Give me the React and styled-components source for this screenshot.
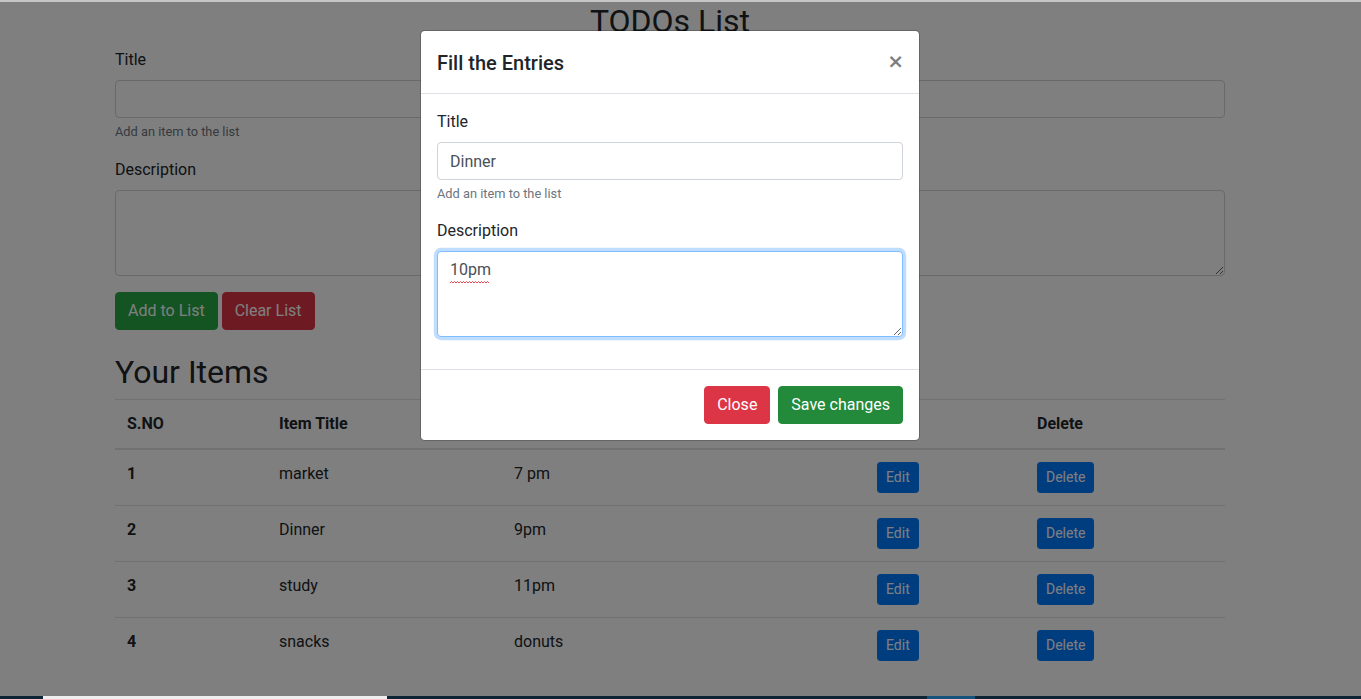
import React from 'react'
import styled, { createGlobalStyle } from 'styled-components'

const GlobalStyle = createGlobalStyle`
  *, *::before, *::after { box-sizing: border-box; }
  html, body { margin: 0; height: 100%; }
  body {
    font-family: Roboto, "Liberation Sans", Arial, sans-serif;
    font-size: 16px;
    line-height: 1.5;
    color: #212529;
    background: #fff;
    overflow: hidden;
  }
`

const items = [
  { id: 1, title: 'market', desc: '7 pm' },
  { id: 2, title: 'Dinner', desc: '9pm' },
  { id: 3, title: 'study', desc: '11pm' },
  { id: 4, title: 'snacks', desc: 'donuts' },
]

function App() {
  return (
    <Screen>
      <GlobalStyle />
      <TopEdge />
      <Viewport>
        <Container>
          <PageTitle>TODOs List</PageTitle>
          <FormGroup>
            <Label>Title</Label>
            <Input type="text" />
            <HelpText>Add an item to the list</HelpText>
          </FormGroup>
          <FormGroup>
            <Label>Description</Label>
            <TextArea rows={3} />
          </FormGroup>
          <ButtonRow>
            <Button $bg="#28a745">Add to List</Button>
            <Button $bg="#dc3545">Clear List</Button>
          </ButtonRow>

          <SectionTitle>Your Items</SectionTitle>
          <Table>
            <thead>
              <tr>
                <Th $width="152px">S.NO</Th>
                <Th $width="235px">Item Title</Th>
                <Th $width="363px">Item Description</Th>
                <Th $width="160px">Edit</Th>
                <Th>Delete</Th>
              </tr>
            </thead>
            <tbody>
              {items.map(item => (
                <tr key={item.id}>
                  <RowHead>{item.id}</RowHead>
                  <Td>{item.title}</Td>
                  <Td>{item.desc}</Td>
                  <Td><Button $bg="#007bff" $small>Edit</Button></Td>
                  <Td><Button $bg="#007bff" $small>Delete</Button></Td>
                </tr>
              ))}
            </tbody>
          </Table>
        </Container>

        <Backdrop />

        <ModalLayer>
          <Dialog>
            <ModalHeader>
              <ModalTitle>Fill the Entries</ModalTitle>
              <CloseX aria-label="Close">&times;</CloseX>
            </ModalHeader>
            <ModalBody>
              <FormGroup>
                <Label>Title</Label>
                <Input type="text" defaultValue="Dinner" />
                <HelpText>Add an item to the list</HelpText>
              </FormGroup>
              <FormGroup>
                <Label>Description</Label>
                <FieldWrap>
                  <TextArea rows={3} defaultValue="10pm" $focused />
                  <Squiggle width="40" height="3" viewBox="0 0 40 3">
                    <path d="M0 2 L1.5 0.5 L3 2 L4.5 0.5 L6 2 L7.5 0.5 L9 2 L10.5 0.5 L12 2 L13.5 0.5 L15 2 L16.5 0.5 L18 2 L19.5 0.5 L21 2 L22.5 0.5 L24 2 L25.5 0.5 L27 2 L28.5 0.5 L30 2 L31.5 0.5 L33 2 L34.5 0.5 L36 2 L37.5 0.5 L39 2" fill="none" stroke="#e0323c" strokeWidth="0.9" />
                  </Squiggle>
                </FieldWrap>
              </FormGroup>
            </ModalBody>
            <ModalFooter>
              <Button $bg="#dc3545">Close</Button>
              <Button $bg="#228a3a">Save changes</Button>
            </ModalFooter>
          </Dialog>
        </ModalLayer>
      </Viewport>
      <Taskbar>
        <TaskItem $w="43px" />
        <TaskItem $w="344px" $c="#eeeeee" />
        <TaskItem $w="540px" />
        <TaskItem $w="48px" $c="#15527c" />
      </Taskbar>
    </Screen>
  )
}

export default App

const Screen = styled.div`
  display: flex;
  flex-direction: column;
  height: 100vh;
`

const TopEdge = styled.div`
  flex-shrink: 0;
  height: 2px;
  background: #c6c6c6;
`

const Viewport = styled.div`
  position: relative;
  flex: 1;
  overflow: hidden;
  padding-right: 21px;
`

const Container = styled.div`
  max-width: 1140px;
  margin: 0 auto;
  padding: 0 15px;
`

const PageTitle = styled.h2`
  margin: 0 0 8px;
  text-align: center;
  font-size: 32px;
  font-weight: 400;
  line-height: 1.2;
`

const SectionTitle = styled.h2`
  margin: 23px 0 8px;
  font-size: 32px;
  font-weight: 400;
  line-height: 1.2;
`

const FormGroup = styled.div`
  margin-bottom: 16px;
`

const Label = styled.label`
  display: inline-block;
  margin-bottom: 8px;
`

const Input = styled.input`
  display: block;
  width: 100%;
  height: 38px;
  padding: 6px 12px;
  font-family: inherit;
  font-size: 16px;
  line-height: 1.5;
  color: #495057;
  background: #fff;
  border: 1px solid #ced4da;
  border-radius: 4px;
  outline: none;
`

const TextArea = styled.textarea`
  display: block;
  width: 100%;
  padding: 6px 12px;
  font-family: inherit;
  font-size: 16px;
  line-height: 1.5;
  color: #495057;
  background: #fff;
  border: 1px solid ${p => (p.$focused ? '#80bdff' : '#ced4da')};
  border-radius: 4px;
  box-shadow: ${p => (p.$focused ? '0 0 0 3.2px rgba(0, 123, 255, 0.25)' : 'none')};
  outline: none;
  resize: vertical;
`

const FieldWrap = styled.div`
  position: relative;
`

const Squiggle = styled.svg`
  position: absolute;
  left: 13px;
  top: 30px;
`

const HelpText = styled.small`
  display: block;
  margin-top: 4px;
  font-size: 12.8px;
  color: #6c757d;
`

const ButtonRow = styled.div`
  display: flex;
  gap: 4px;
`

const Button = styled.button`
  display: inline-block;
  padding: ${p => (p.$small ? '4px 8px' : '6px 12px')};
  font-family: inherit;
  font-size: ${p => (p.$small ? '14px' : '16px')};
  line-height: 1.5;
  color: #fff;
  background: ${p => p.$bg};
  border: 1px solid ${p => p.$bg};
  border-radius: ${p => (p.$small ? '3.2px' : '4px')};
  cursor: pointer;
`

const Table = styled.table`
  width: 100%;
  border-collapse: collapse;
  margin-bottom: 16px;
  color: #212529;
`

const Th = styled.th`
  width: ${p => p.$width || 'auto'};
  padding: 12px;
  text-align: left;
  vertical-align: bottom;
  font-weight: 700;
  border-top: 1px solid #dee2e6;
  border-bottom: 2px solid #dee2e6;
`

const RowHead = styled.th`
  padding: 12px;
  text-align: left;
  vertical-align: top;
  font-weight: 700;
  border-top: 1px solid #dee2e6;
`

const Td = styled.td`
  padding: 12px;
  vertical-align: top;
  border-top: 1px solid #dee2e6;
`

const Backdrop = styled.div`
  position: absolute;
  inset: 0;
  background: rgba(0, 0, 0, 0.5);
`

const ModalLayer = styled.div`
  position: absolute;
  inset: 0;
  padding-right: 21px;
  overflow: hidden;
`

const Dialog = styled.div`
  width: 500px;
  margin: 28px auto;
  background: #fff;
  background-clip: padding-box;
  border: 1px solid rgba(0, 0, 0, 0.2);
  border-radius: 4.8px;
`

const ModalHeader = styled.div`
  display: flex;
  align-items: flex-start;
  justify-content: space-between;
  padding: 16px;
  border-bottom: 1px solid #dee2e6;
`

const ModalTitle = styled.h5`
  margin: 1px 0 -1px;
  font-size: 20px;
  font-weight: 500;
  line-height: 1.5;
`

const CloseX = styled.button`
  padding: 20px 16px 16px 16px;
  margin: -16px -17px -16px auto;
  font-family: "DejaVu Sans", sans-serif;
  font-size: 20px;
  font-weight: 700;
  line-height: 1;
  color: #000;
  text-shadow: 0 1px 0 #fff;
  opacity: 0.5;
  background: transparent;
  border: 0;
`

const ModalBody = styled.div`
  padding: 16px;
`

const ModalFooter = styled.div`
  display: flex;
  justify-content: flex-end;
  align-items: center;
  gap: 8px;
  padding: 16px;
  border-top: 1px solid #dee2e6;
`

const Taskbar = styled.div`
  flex-shrink: 0;
  display: flex;
  height: 3px;
  background: #0c2433;
`

const TaskItem = styled.div`
  width: ${p => p.$w};
  background: ${p => p.$c || 'transparent'};
`
